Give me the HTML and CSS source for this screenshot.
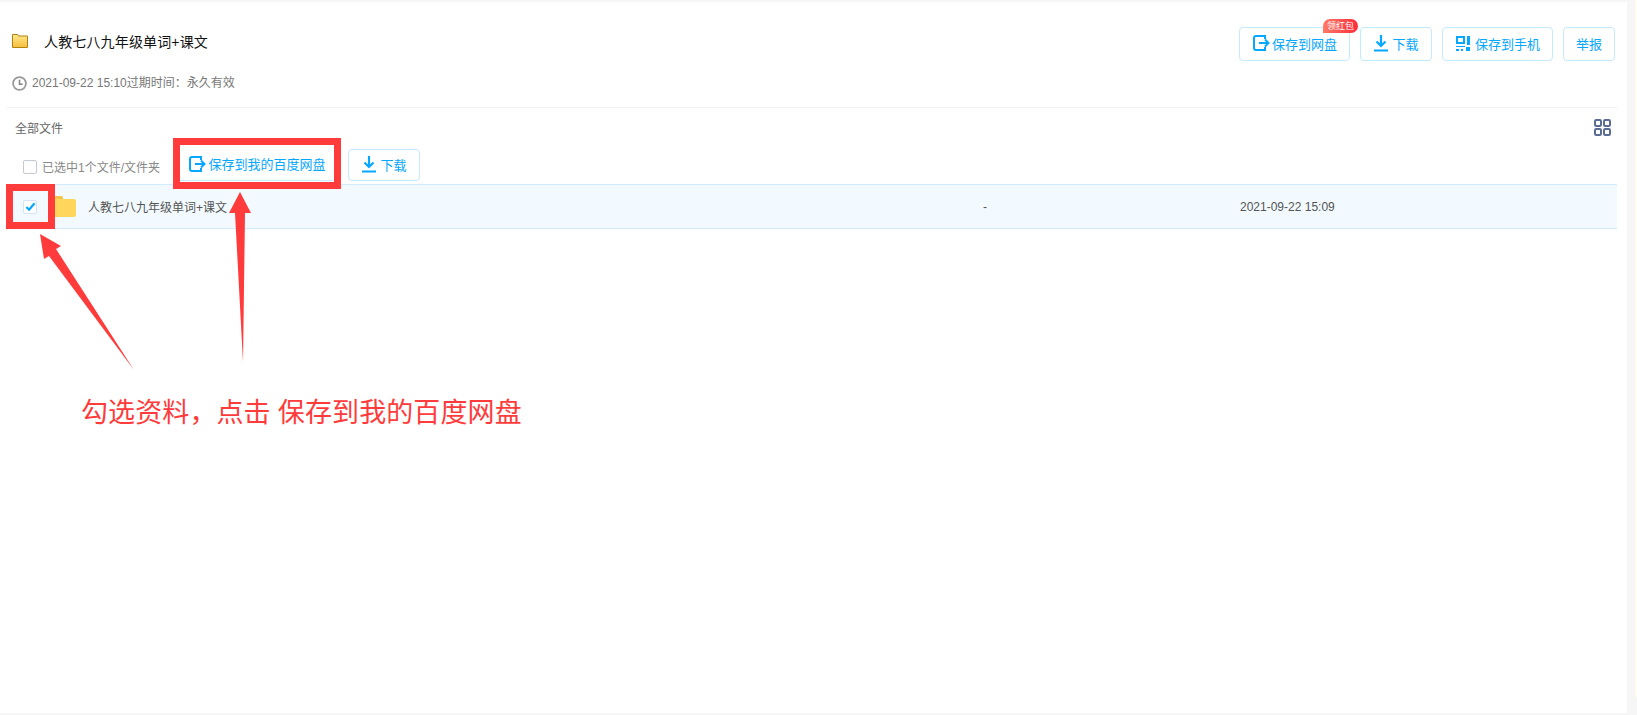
FILE: index.html
```html
<!DOCTYPE html>
<html lang="zh-CN">
<head>
<meta charset="utf-8">
<title>人教七八九年级单词+课文</title>
<link rel="stylesheet" href="styles.css">
</head>
<body>
<div class="page">
  <main class="panel">
    <header class="head">
      <div class="head-left">
        <div class="title-row">
          <svg class="title-folder" viewBox="0 0 16 15"><defs><linearGradient id="fg" x1="0" y1="0" x2="0" y2="1"><stop offset="0" stop-color="#ffe88f"/><stop offset="1" stop-color="#f6bf3c"/></linearGradient></defs><path d="M.5 1.500h5l1 1.500h9v11.500H.5z" fill="url(#fg)" stroke="#b0820f"/></svg>
          <h1 class="title">人教七八九年级单词+课文</h1>
        </div>
        <div class="time-row">
          <svg class="clock" viewBox="0 0 15 15"><circle cx="7.500" cy="7.500" r="6.400" fill="none" stroke="#999" stroke-width="1.800"/><path d="M7.500 3.800v4.400h3.200" fill="none" stroke="#888" stroke-width="1.600"/></svg>
          <span>2021-09-22 15:10过期时间：永久有效</span>
        </div>
      </div>
      <div class="actions">
        <a class="btn btn-save">
          <svg class="ico" viewBox="0 0 18 18"><path d="M13 5V2H4a2 2 0 0 0-2 2v10a2 2 0 0 0 2 2h9v-3" fill="none" stroke="#06a7ff" stroke-width="2"/><path d="M7 9h9M13 5.500 16.500 9 13 12.500" fill="none" stroke="#06a7ff" stroke-width="2"/></svg>保存到网盘
          <span class="badge">领红包</span>
        </a>
        <a class="btn btn-down">
          <svg class="ico" viewBox="0 0 16 18"><path d="M8 1v11M3.500 7.500 8 12l4.500-4.500M1 16.500h14" fill="none" stroke="#06a7ff" stroke-width="2.200"/></svg>下载
        </a>
        <a class="btn btn-phone">
          <svg class="ico" viewBox="0 0 16 16"><path d="M1 1h9v8H1zM3 3v4h5V3z" fill="#06a7ff" fill-rule="evenodd"/><path d="M12 1h3v9h-3zM1 11h9v1H1zM1 14h3v2H1zM6 14h2v2H6zM11 12h4v4h-4z" fill="#06a7ff"/></svg>保存到手机
        </a>
        <a class="btn btn-report">举报</a>
      </div>
    </header>
    <div class="crumb-row">
      <span class="crumb">全部文件</span>
      <svg class="grid-ico" viewBox="0 0 17 17"><g fill="none" stroke="#5a6b94" stroke-width="2"><rect x="1" y="1" width="6" height="6" rx="1.200"/><rect x="10" y="1" width="6" height="6" rx="1.200"/><rect x="1" y="10" width="6" height="6" rx="1.200"/><rect x="10" y="10" width="6" height="6" rx="1.200"/></g></svg>
    </div>
    <div class="toolbar">
      <span class="box box-all"></span>
      <span class="picked">已选中1个文件/文件夹</span>
      <a class="btn btn-mine">
        <svg class="ico" viewBox="0 0 18 18"><path d="M13 5V2H4a2 2 0 0 0-2 2v10a2 2 0 0 0 2 2h9v-3" fill="none" stroke="#06a7ff" stroke-width="2"/><path d="M7 9h9M13 5.500 16.500 9 13 12.500" fill="none" stroke="#06a7ff" stroke-width="2"/></svg>保存到我的百度网盘
      </a>
      <a class="btn btn-tool-down">
        <svg class="ico" viewBox="0 0 16 18"><path d="M8 1v11M3.500 7.500 8 12l4.500-4.500M1 16.500h14" fill="none" stroke="#06a7ff" stroke-width="2.200"/></svg>下载
      </a>
    </div>
    <div class="file-row">
      <span class="box box-on">
        <svg viewBox="0 0 12 12"><path d="M1.500 6.500 4.500 9.500 10.500 2.500" fill="none" stroke="#06a7ff" stroke-width="2.400"/></svg>
      </span>
      <svg class="row-folder" viewBox="0 0 22 21"><path d="M0 2a2 2 0 0 1 2-2h5a2 2 0 0 1 2 2v1H0z" fill="#f2c14e"/><path d="M0 4a1 1 0 0 1 1-1h19a2 2 0 0 1 2 2v14a2 2 0 0 1-2 2H2a2 2 0 0 1-2-2z" fill="#ffd65c"/></svg>
      <span class="file-name">人教七八九年级单词+课文</span>
      <span class="file-size">-</span>
      <span class="file-date">2021-09-22 15:09</span>
    </div>
  </main>
  <aside class="gutter"><span class="gutter-line"></span></aside>

  <span class="mark mark-btn"></span>
  <span class="mark mark-check"></span>
  <svg class="arrows" viewBox="0 0 1637 715">
    <path d="M40 234 61 246 56 249 134 370 49 256 44 259z" fill="#ff3b3b"/>
    <path d="M240 192 251 213 245 213 243 362 235 213 229 213z" fill="#ff3b3b"/>
  </svg>
  <p class="note">勾选资料，点击 保存到我的百度网盘</p>
</div>
</body>
</html>
```

FILE: styles.css
```css
* { box-sizing: border-box; }
html, body { margin: 0; padding: 0; }
body {
  width: 1637px;
  height: 715px;
  overflow: hidden;
  background: #f6f6f6;
  font-family: "Liberation Sans", "Noto Sans CJK SC", sans-serif;
  font-size: 12px;
  color: #666;
}
.page { position: relative; display: flex; width: 1637px; height: 715px; }
.panel {
  width: 1627px;
  height: 711px;
  margin-top: 2px;
  padding: 0 10px 0 7px;
  background: #fff;
}
.gutter { flex: 1; display: flex; justify-content: flex-end; }
.gutter-line { width: 2px; height: 697px; background: #fffdf0; }

.head {
  display: flex;
  justify-content: space-between;
  height: 106px;
  border-bottom: 1px solid #f2f2f2;
  padding-top: 25px;
}
.head-left { padding-left: 5px; }
.title-row { display: flex; align-items: center; height: 30px; }
.title-folder { width: 16px; height: 15px; margin-right: 16px; margin-top: -3px; }
.title { margin: 0; font-size: 14px; font-weight: 400; letter-spacing: .15px; color: #111; line-height: 30px; }
.time-row { display: flex; align-items: center; gap: 5px; margin-top: 16px; height: 20px; color: #777; line-height: 20px; }
.clock { width: 15px; height: 15px; }

.actions { display: flex; gap: 10px; margin-right: 2px; }
.btn {
  position: relative;
  display: flex;
  align-items: center;
  justify-content: center;
  height: 34px;
  padding-bottom: 2px;
  border: 1px solid #c3eafd;
  border-radius: 4px;
  color: #06a7ff;
  background: #fff;
  font-size: 13px;
  white-space: nowrap;
}
.ico { width: 18px; height: 18px; margin-right: 2px; flex: none; }
.btn-save { width: 111px; }
.btn-down { width: 72px; }
.btn-down .ico, .btn-tool-down .ico { width: 16px; margin-right: 3px; }
.btn-phone { width: 111px; }
.btn-phone .ico { width: 16px; height: 16px; margin-right: 4px; }
.btn-report { width: 52px; }
.badge {
  position: absolute;
  top: -9px;
  right: -9px;
  width: 35px;
  height: 14px;
  border-radius: 7px 7px 7px 0;
  background: linear-gradient(90deg, #ff7a66, #fb2c3c);
  color: #fff;
  font-size: 9px;
  line-height: 14px;
  text-align: center;
}

.crumb-row {
  display: flex;
  justify-content: space-between;
  align-items: center;
  height: 30px;
  padding: 0 6px 0 8px;
  margin-top: 4px;
}
.crumb { color: #666; }
.grid-ico { width: 17px; height: 17px; }

.toolbar { display: flex; align-items: center; height: 32px; margin-top: 7px; padding-left: 16px; }
.box {
  flex: none;
  display: flex;
  align-items: center;
  justify-content: center;
  width: 14px;
  height: 14px;
  border: 1px solid #c4c9d4;
  border-radius: 2px;
  background: #fff;
}
.box-all { margin-top: 3px; }
.box-on { border-color: #d6e4f5; }
.box-on svg { width: 11px; height: 11px; }
.picked { margin: 3px 0 0 5px; width: 138px; color: #888; white-space: nowrap; }
.btn-mine {
  flex: none;
  width: 154px;
  height: 32px;
  margin-right: 14px;
  border-width: 0 0 1px;
  border-radius: 0;
}
.btn-tool-down { width: 72px; height: 32px; flex: none; }

.file-row {
  display: flex;
  align-items: center;
  height: 45px;
  margin-top: 3px;
  padding-left: 16px;
  border-top: 1px solid #d2ebfb;
  border-bottom: 1px solid #d2ebfb;
  background: #f2faff;
  color: #555;
}
.row-folder { width: 22px; height: 21px; margin-left: 17px; }
.file-name { margin-left: 12px; width: 895px; white-space: nowrap; }
.file-size { width: 257px; }
.file-date { white-space: nowrap; }

.mark { position: absolute; border: 7px solid #ff3b3b; }
.mark-btn { left: 173px; top: 138px; width: 168px; height: 51px; }
.mark-check { left: 6px; top: 184px; width: 49px; height: 45px; }
.arrows { position: absolute; left: 0; top: 0; width: 1637px; height: 715px; pointer-events: none; }
.note {
  position: absolute;
  left: 81px;
  top: 392px;
  margin: 0;
  font-family: "Noto Sans CJK SC", sans-serif;
  font-size: 27px;
  line-height: 38px;
  letter-spacing: .1px;
  word-spacing: 1px;
  color: #ff3b3b;
  white-space: nowrap;
}
```
